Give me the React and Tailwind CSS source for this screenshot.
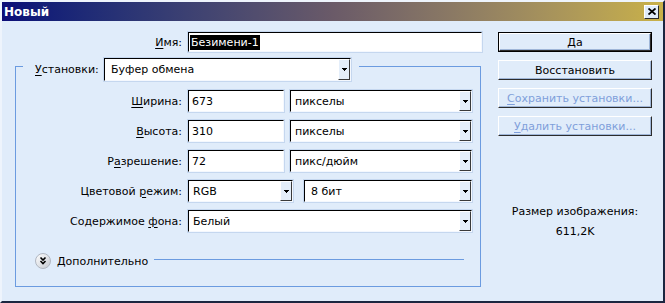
import React from "react";

const ul = "underline decoration-1 underline-offset-[2px]";

// sunken edit frame, classic style
const sunken =
  "flex bg-white border border-t-black border-l-black border-b-[#f4f8fe] border-r-[#f4f8fe] shadow-[0_0_0_1px_#c5d7ef]";

function DropArrow() {
  return (
    <div className="flex w-[12px] shrink-0 items-center justify-center border border-t-white border-l-white border-b-[#3a3a3a] border-r-[#3a3a3a] bg-[#e4eefa]">
      <svg width="5" height="3" viewBox="0 0 5 3" shapeRendering="crispEdges">
        <rect x="0" y="0" width="5" height="1" fill="#000" />
        <rect x="1" y="1" width="3" height="1" fill="#000" />
        <rect x="2" y="2" width="1" height="1" fill="#000" />
      </svg>
    </div>
  );
}

function Field({ value, className = "" }) {
  return (
    <div className={`${sunken} h-[22px] items-center pl-[3px] ${className}`}>
      {value}
    </div>
  );
}

function Select({ value, className = "", pad = "pl-[4px]" }) {
  return (
    <div className={`${sunken} h-[22px] ${className}`}>
      <span className={`flex flex-1 items-center ${pad}`}>{value}</span>
      <DropArrow />
    </div>
  );
}

function Row({ label, children }) {
  return (
    <div className="flex items-center">
      <span className="mr-[6px] w-[166px] text-right">{label}</span>
      {children}
    </div>
  );
}

function Button({ children, isDefault = false, disabled = false }) {
  const face =
    "flex flex-1 items-center justify-center border border-t-white border-l-white border-b-[#2c2c2c] border-r-[#2c2c2c] bg-[#e0ecfa] shadow-[inset_-1px_-1px_0_#9fb6d8]";
  return (
    <div
      className={`flex h-[20px] w-[154px] ${isDefault ? "border border-black" : ""} ${
        disabled ? "text-[#7f9fdb]" : "text-black"
      }`}
    >
      <div className={face}>{children}</div>
    </div>
  );
}

function MoreIcon() {
  return (
    <svg width="16" height="16" viewBox="0 0 16 16">
      <defs>
        <linearGradient id="mg" x1="0" y1="0" x2="1" y2="1">
          <stop offset="0" stopColor="#ffffff" />
          <stop offset="1" stopColor="#c4c8d0" />
        </linearGradient>
      </defs>
      <circle cx="8" cy="8" r="7.5" fill="url(#mg)" stroke="#b0b6c0" />
      <path
        d="M5.5 4.5 L8 7 L10.5 4.5 M5.5 8 L8 10.5 L10.5 8"
        fill="none"
        stroke="#000"
        strokeWidth="1.6"
      />
    </svg>
  );
}

export default function App() {
  return (
    <div className="flex h-[303px] w-[665px] flex-col border-l-2 border-t-2 border-r-2 border-b-2 border-l-[#eef4fc] border-t-[#eef4fc] border-r-[#1c2640] border-b-[#1c2640] bg-[#e0ecfa] font-['DejaVu_Sans',sans-serif] text-[11px] leading-none text-black">
      {/* title bar */}
      <div className="flex h-[19px] shrink-0 items-center justify-between bg-linear-to-r from-[#0c0c78] via-[#6a5a68] to-[#c9b148] pl-[2px] pr-[4px]">
        <span className="text-[12px] font-bold text-white">Новый</span>
        <div className="flex h-[14px] w-[15px] items-center justify-center border border-t-white border-l-white border-b-[#2a2a2a] border-r-[#2a2a2a] bg-[#e0ecfa]">
          <svg width="8" height="7" viewBox="0 0 8 7">
            <path d="M0.5 0.5 L7.5 6.5 M7.5 0.5 L0.5 6.5" stroke="#000" strokeWidth="1.8" />
          </svg>
        </div>
      </div>

      <div className="flex pt-[11px]">
        {/* left column */}
        <div className="flex w-[480px] flex-col pl-[13px]">
          <div className="flex items-center">
            <span className="mr-[6px] w-[167px] text-right">
              <u className={ul}>И</u>мя:
            </span>
            <div className={`${sunken} h-[20px] w-[294px] items-center pl-[1px]`}>
              <span className="bg-black px-px py-[2px] text-white">Безимени-1</span>
            </div>
          </div>

          <fieldset className="w-[466px] border border-[#6b9be0]">
            <legend className="ml-[7px] pl-[12px] pr-[8px] pt-[6px]">
              <div className="flex items-center">
                <span className="mr-[6px] w-[63px]">
                  <u className={ul}>У</u>становки:
                </span>
                <Select value="Буфер обмена" className="h-[23px] w-[247px]" pad="pl-[6px]" />
              </div>
            </legend>

            <div className="flex flex-col gap-[8px] pt-[9px]">
              <Row
                label={
                  <>
                    <u className={ul}>Ш</u>ирина:
                  </>
                }
              >
                <Field value="673" className="w-[96px]" />
                <Select value="пикселы" className="ml-[6px] w-[182px]" />
              </Row>
              <Row
                label={
                  <>
                    <u className={ul}>В</u>ысота:
                  </>
                }
              >
                <Field value="310" className="w-[96px]" />
                <Select value="пикселы" className="ml-[6px] w-[182px]" />
              </Row>
              <Row
                label={
                  <>
                    Р<u className={ul}>а</u>зрешение:
                  </>
                }
              >
                <Field value="72" className="w-[96px]" />
                <Select value="пикс/дюйм" className="ml-[6px] w-[182px]" />
              </Row>
              <Row
                label={
                  <>
                    Цветовой <u className={ul}>р</u>ежим:
                  </>
                }
              >
                <Select value="RGB" className="w-[105px]" />
                <Select value="8 бит" className="ml-[11px] w-[168px]" pad="pl-[6px]" />
              </Row>
              <Row
                label={
                  <>
                    Содержимое <u className={ul}>ф</u>она:
                  </>
                }
              >
                <Select value="Белый" className="w-[284px]" />
              </Row>
            </div>

            <div className="mb-[17px] ml-[19px] mr-[16px] mt-[21px] flex h-[16px] items-center">
              <MoreIcon />
              <span className="ml-[6px]">Дополнительно</span>
              <div className="mb-[3px] ml-[6px] h-px flex-1 bg-[#6b9be0]" />
            </div>
          </fieldset>
        </div>

        {/* right column */}
        <div className="ml-[16px] flex w-[154px] flex-col">
          <div className="flex flex-col gap-[8px]">
            <Button isDefault>Да</Button>
            <Button>Восстановить</Button>
            <Button disabled>
              <span>
                <u className={ul}>С</u>охранить установки...
              </span>
            </Button>
            <Button disabled>
              <span>
                <u className={ul}>У</u>далить установки...
              </span>
            </Button>
          </div>
          <div className="mt-[69px] flex flex-col items-center gap-[7px] leading-[13px]">
            <span>Размер изображения:</span>
            <span>611,2K</span>
          </div>
        </div>
      </div>
    </div>
  );
}
